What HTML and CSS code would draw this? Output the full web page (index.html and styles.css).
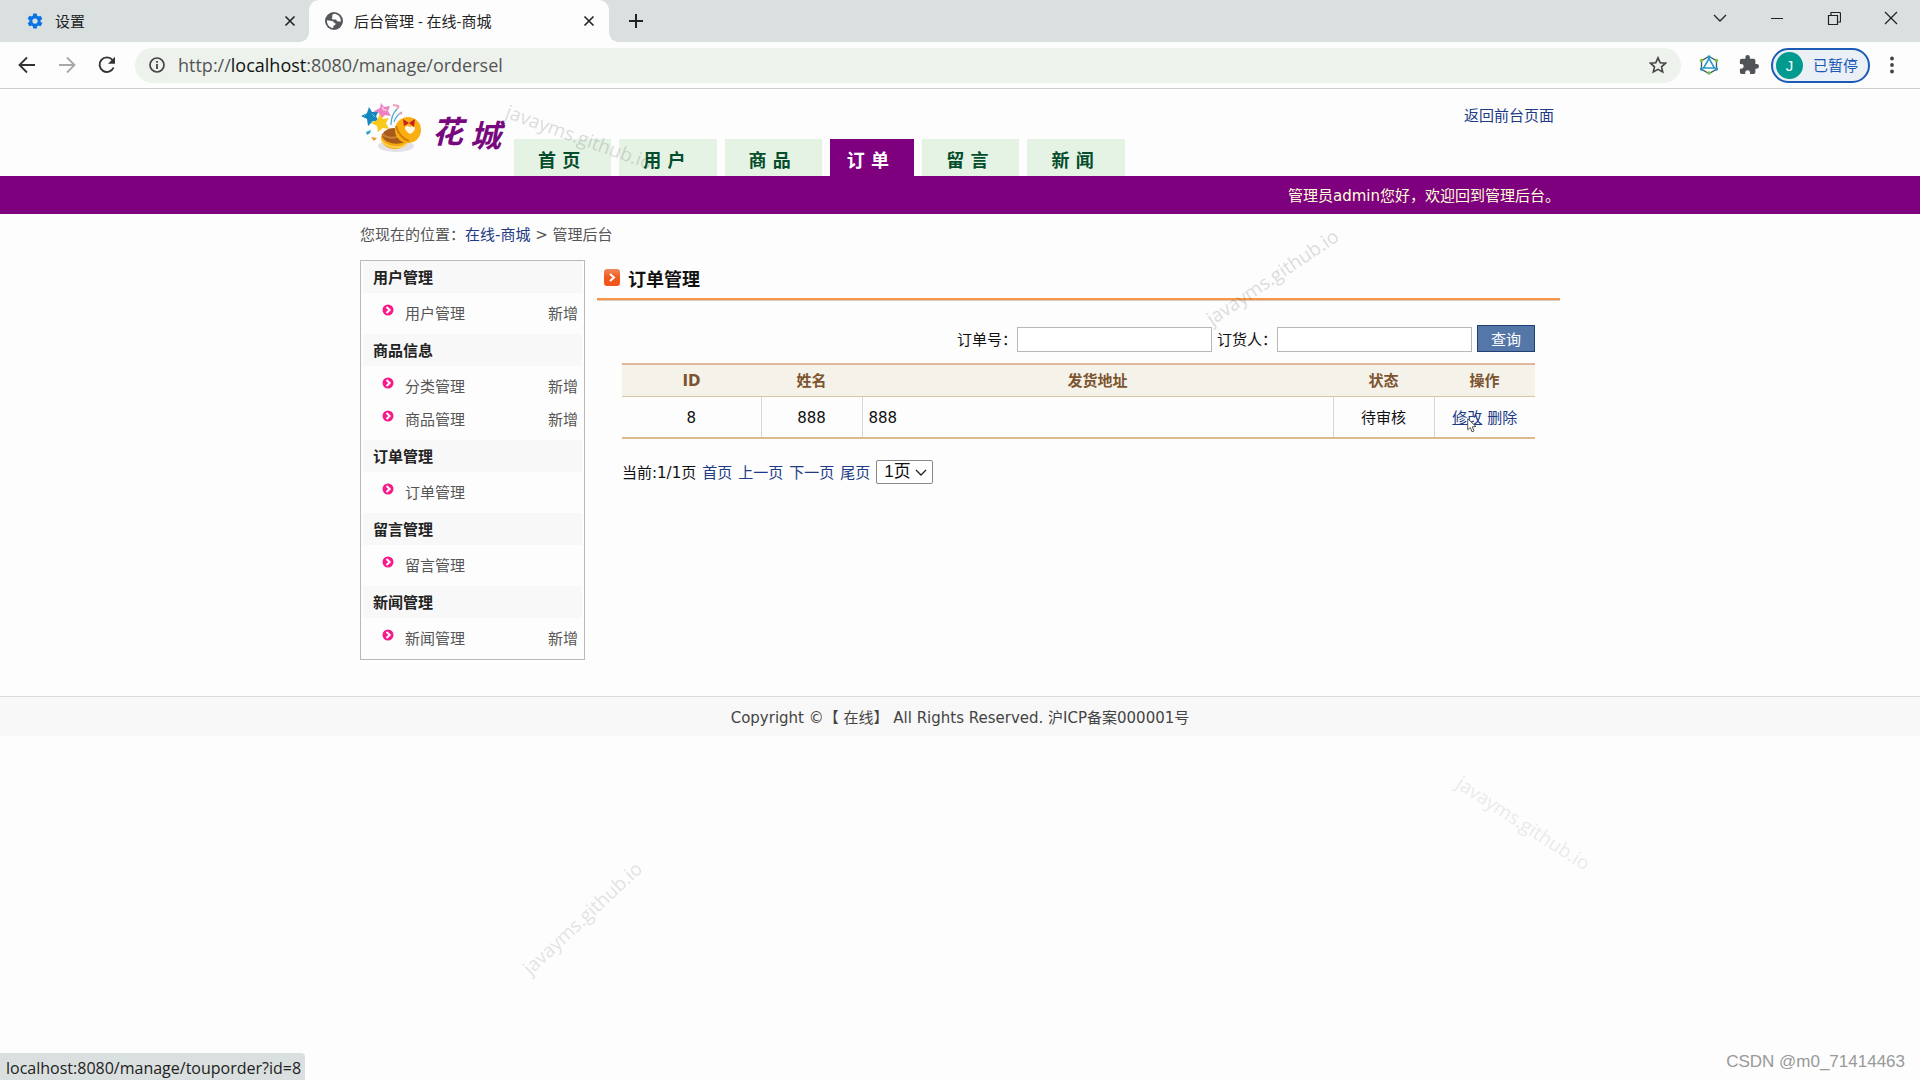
FILE: index.html
```html
<!DOCTYPE html>
<html lang="zh-CN">
<head>
<meta charset="utf-8">
<title>后台管理 - 在线-商城</title>
<link rel="stylesheet" href="styles.css">
</head>
<body>
<svg class="sprite" aria-hidden="true">
  <symbol id="i-close" viewBox="0 0 12 12"><path d="M1.500 1.500l9 9M10.500 1.500l-9 9" fill="none" stroke="currentColor" stroke-width="1.600"/></symbol>
  <symbol id="i-bullet" viewBox="0 0 12 12"><circle cx="6" cy="6" r="5.500" fill="#f5198b"/><path d="M4.500 3l3.200 3-3.200 3" fill="none" stroke="#fff" stroke-width="2"/></symbol>
</svg>

<div class="browser">
  <div class="tabs">
    <div class="tab">
      <svg width="18" height="18" viewBox="0 0 24 24" fill="#0b74e5"><path d="M19.430 12.980a7.800 7.800 0 0 0 0-1.960l2.110-1.650a.5.5 0 0 0 .12-.64l-2-3.460a.5.5 0 0 0-.61-.22l-2.490 1a7.300 7.300 0 0 0-1.690-.98l-.38-2.650A.49.490 0 0 0 14 2h-4a.49.490 0 0 0-.49.420l-.38 2.650c-.61.250-1.170.590-1.690.980l-2.490-1a.49.490 0 0 0-.61.220l-2 3.460a.49.490 0 0 0 .12.640l2.110 1.650a7.900 7.900 0 0 0 0 1.960l-2.110 1.650a.5.5 0 0 0-.12.640l2 3.460c.12.220.390.300.610.220l2.490-1c.520.400 1.080.730 1.690.980l.38 2.650c.030.240.240.420.490.420h4c.250 0 .460-.18.490-.42l.38-2.650c.610-.25 1.170-.59 1.690-.98l2.490 1c.230.090.490 0 .61-.22l2-3.460a.5.5 0 0 0-.12-.64zM12 15.500a3.500 3.500 0 1 1 0-7 3.500 3.500 0 0 1 0 7z"/></svg>
      <span class="tab-title">设置</span>
      <button class="plain" type="button" aria-label="关闭"><svg width="12" height="12"><use href="#i-close"/></svg></button>
    </div>
    <div class="tab tab-active">
      <svg width="18" height="18" viewBox="0 0 18 18"><circle cx="9" cy="9" r="9" fill="#54585c"/><path d="M10.500 1.900C7.500 1.600 6.500 4 7.500 5.200c-1.500 1.300-.5 2.300.8 2.300h2.200c1.500.2.900 1.700 2.300 2 .9.200 2.600 0 3.100-.3.100-3.300-1.900-6.400-5.400-7.300zM2 8.300c-.3 4 2.300 7.500 6.300 7.700v-2.200c1.300-.3 2.400-1.100 2.300-2.400-1.500 0-1.800-1.800-3.500-2.300z" fill="#fff"/></svg>
      <span class="tab-title">后台管理 - 在线-商城</span>
      <button class="plain" type="button" aria-label="关闭"><svg width="12" height="12"><use href="#i-close"/></svg></button>
    </div>
    <button class="plain new-tab" type="button" aria-label="新标签页"><svg width="16" height="16" viewBox="0 0 16 16"><path d="M8 1v14M1 8h14" stroke="currentColor" stroke-width="2"/></svg></button>
    <div class="window-buttons">
      <button class="plain" type="button" aria-label="搜索标签页"><svg width="14" height="14" viewBox="0 0 14 14"><path d="M1 4l6 6 6-6" fill="none" stroke="currentColor" stroke-width="1.300"/></svg></button>
      <button class="plain" type="button" aria-label="最小化"><svg width="14" height="14" viewBox="0 0 14 14"><path d="M1 7.500h12" stroke="currentColor"/></svg></button>
      <button class="plain" type="button" aria-label="还原"><svg width="14" height="14" viewBox="0 0 14 14"><path d="M1.500 4.500h9v9h-9zM4 4V1.500h8.500a1 1 0 0 1 1 1V11H11" fill="none" stroke="currentColor" stroke-width="1.200"/></svg></button>
      <button class="plain" type="button" aria-label="关闭窗口"><svg width="14" height="14" viewBox="0 0 14 14"><path d="M1 1l12 12M13 1L1 13" stroke="currentColor" stroke-width="1.300"/></svg></button>
    </div>
  </div>
  <div class="toolbar">
    <button class="plain tool" type="button" aria-label="后退"><svg width="18" height="18" viewBox="0 0 18 18"><path d="M17 9H2M9 1.500L1.500 9 9 16.500" fill="none" stroke="currentColor" stroke-width="1.800"/></svg></button>
    <button class="plain tool tool-off" type="button" aria-label="前进"><svg width="18" height="18" viewBox="0 0 18 18"><path d="M1 9h15M9 1.500L16.500 9 9 16.500" fill="none" stroke="currentColor" stroke-width="1.800"/></svg></button>
    <button class="plain tool" type="button" aria-label="重新加载"><svg width="18" height="18" viewBox="0 0 18 18"><path d="M15.600 11.500A7.300 7.300 0 1 1 14.500 4" fill="none" stroke="currentColor" stroke-width="1.900"/><path d="M17 .8v7h-7z" fill="currentColor"/></svg></button>
    <div class="address">
      <svg width="16" height="16" viewBox="0 0 16 16"><circle cx="8" cy="8" r="7" fill="none" stroke="#444" stroke-width="1.700"/><path d="M8 7v5M8 4v1.800" stroke="#444" stroke-width="1.800"/></svg>
      <span class="url">http://<b>localhost</b>:8080/manage/ordersel</span>
      <svg width="18" height="18" viewBox="0 0 18 18"><path d="M9 1.800l2.200 4.900 5.300.5-4 3.600 1.200 5.200L9 13.300 4.300 16l1.200-5.200-4-3.600 5.300-.5z" fill="none" stroke="#444" stroke-width="1.600"/></svg>
    </div>
    <svg class="ext" width="20" height="20" viewBox="0 0 20 20"><path d="M10 1.500l7.500 4.200v8.600L10 18.500l-7.500-4.200V5.700z" fill="none" stroke="#3a5a66" stroke-width="1.300"/><path d="M10 3.500l5.500 9.500h-11z" fill="none" stroke="#2596c8" stroke-width="1.500"/><g fill="#7ac143"><circle cx="2.500" cy="5.500" r="1.700"/><circle cx="17.500" cy="5.500" r="1.700"/><circle cx="10" cy="18" r="1.700"/></g><g fill="#2596c8"><circle cx="10" cy="2" r="1.700"/><circle cx="2.500" cy="14" r="1.700"/><circle cx="17.500" cy="14" r="1.700"/></g></svg>
    <svg class="ext" width="20" height="20" viewBox="1 1 22 22" fill="#505458"><path d="M20.500 11H19V7a2 2 0 0 0-2-2h-4V3.500a2.500 2.500 0 0 0-5 0V5H4a2 2 0 0 0-2 2v3.800h1.500a2.700 2.700 0 0 1 0 5.400H2V20a2 2 0 0 0 2 2h3.800v-1.500a2.700 2.700 0 0 1 5.400 0V22H17a2 2 0 0 0 2-2v-4h1.500a2.500 2.500 0 0 0 0-5z"/></svg>
    <button class="profile" type="button"><span class="avatar">J</span>已暂停</button>
    <button class="plain menu" type="button" aria-label="菜单"><svg width="4" height="18" viewBox="0 0 4 18" fill="#444"><circle cx="2" cy="2.500" r="1.900"/><circle cx="2" cy="9" r="1.900"/><circle cx="2" cy="15.500" r="1.900"/></svg></button>
  </div>
</div>

<div class="page">
  <header class="wrap header">
    <svg class="logo" width="154" height="60" viewBox="0 0 154 60" role="img" aria-label="花城">
      <path d="M9 5l3 5 7-1-3 5 3 6-6-1-5 5-1-7-6-3 6-3z" fill="#1687bd"/>
      <path d="M12 12l3 3M7 11l-3 3" stroke="#6bc3e8" stroke-width="1"/>
      <path d="M21 1l3 4 6-1-2 5 3 5-6-1-4 4-2-6-5-2 6-3z" fill="#ee7fc0"/>
      <path d="M22 5l2 3 3 0" fill="none" stroke="#fbc6e4" stroke-width="1.500"/>
      <path d="M20 12l3 5 6-1-3 5 3 6-6-1-5 4-1-6-6-3 6-3z" fill="#fbc81c"/>
      <path d="M31 23c0-8 2-12 6-16M34 20c2-6 4-8 8-10" fill="none" stroke="#45a9cf" stroke-width="1.200"/>
      <path d="M33 3l6 1M37 7l2-3M39 12l3-1" stroke="#ee9fb8" stroke-width="2"/>
      <path d="M6 30l5-2-1 3-3 2z" fill="#2d9fc5"/><path d="M11 35l6 1-3 3z" fill="#ee9527"/>
      <ellipse cx="36" cy="44" rx="18" ry="6" fill="#c9c4cf" opacity=".5"/>
      <path d="M21 35c0 15 24 16 27 3l-9-9c-8-2-17 0-18 6z" fill="#f5a70d"/>
      <path d="M22 34c3 8 17 10 24 5-3-8-8-12-12-13-6 0-11 3-12 8z" fill="#a65a1b"/>
      <path d="M22 32c6 5 14 5 20 0" fill="none" stroke="#c98432" stroke-width="2"/>
      <path d="M22 39c5 7 19 8 24 3" fill="none" stroke="#ffd34e" stroke-width="2"/>
      <circle cx="48" cy="28" r="13" fill="#f9ae11"/>
      <path d="M36 24c2 7 7 13 13 15" fill="none" stroke="#d27b08" stroke-width="2"/>
      <path d="M50 32c-8-5-5-10 0-7 5-3 8 3 0 7z" fill="#fff8e9"/>
      <path d="M49 21l-6-4 1 7zM49 21l6-4-1 8z" fill="#c91f24"/>
      <text class="logo-text" x="72" y="41">花</text><text class="logo-text" x="110" y="45">城</text>
    </svg>
    <nav class="nav">
      <a href="#">首 页</a><a href="#">用 户</a><a href="#">商 品</a><a class="current" href="#">订 单</a><a href="#">留 言</a><a href="#">新 闻</a>
    </nav>
    <a class="back" href="#">返回前台页面</a>
  </header>
  <div class="welcome"><div class="wrap">管理员admin您好，欢迎回到管理后台。</div></div>
  <div class="wrap crumbs">您现在的位置：<a href="#">在线-商城</a> &gt; 管理后台</div>

  <div class="wrap columns">
    <aside class="side">
      <h3>用户管理</h3>
      <ul>
        <li><svg width="12" height="12"><use href="#i-bullet"/></svg><a href="#">用户管理</a><a class="add" href="#">新增</a></li>
      </ul>
      <h3>商品信息</h3>
      <ul>
        <li><svg width="12" height="12"><use href="#i-bullet"/></svg><a href="#">分类管理</a><a class="add" href="#">新增</a></li>
        <li><svg width="12" height="12"><use href="#i-bullet"/></svg><a href="#">商品管理</a><a class="add" href="#">新增</a></li>
      </ul>
      <h3>订单管理</h3>
      <ul>
        <li><svg width="12" height="12"><use href="#i-bullet"/></svg><a href="#">订单管理</a></li>
      </ul>
      <h3>留言管理</h3>
      <ul>
        <li><svg width="12" height="12"><use href="#i-bullet"/></svg><a href="#">留言管理</a></li>
      </ul>
      <h3>新闻管理</h3>
      <ul>
        <li><svg width="12" height="12"><use href="#i-bullet"/></svg><a href="#">新闻管理</a><a class="add" href="#">新增</a></li>
      </ul>
    </aside>

    <main class="main">
      <h2><svg width="16" height="18" viewBox="0 0 16 18"><defs><linearGradient id="g" x1="0" y1="0" x2="0" y2="1"><stop offset="0" stop-color="#ee8a5c"/><stop offset=".5" stop-color="#ee5a1c"/><stop offset="1" stop-color="#f4531c"/></linearGradient></defs><rect width="16" height="17" rx="3" fill="url(#g)"/><path d="M6 5l4 3.500L6 12" fill="none" stroke="#fff" stroke-width="2"/></svg>订单管理</h2>
      <div class="content">
        <form class="search">
          <label for="orderNo">订单号：</label><input id="orderNo" type="text">
          <label for="buyer">订货人：</label><input id="buyer" type="text">
          <button type="button">查询</button>
        </form>
        <table class="orders">
          <colgroup><col class="c-id"><col class="c-s"><col><col class="c-s"><col class="c-s"></colgroup>
          <thead><tr><th>ID</th><th>姓名</th><th>发货地址</th><th>状态</th><th>操作</th></tr></thead>
          <tbody><tr><td>8</td><td>888</td><td class="addr">888</td><td>待审核</td>
            <td><span class="actions"><a class="hovered" href="#">修改</a> <a href="#">删除</a><svg class="cursor" width="10" height="15" viewBox="0 0 10 15"><path d="M.7.8v11l2.600-2.300 1.700 4.300 2-.8-1.700-4.200 3.700-.3z" fill="#fff" stroke="#555"/></svg></span></td></tr></tbody>
        </table>
        <div class="pager">
          <span>当前:1/1页</span>
          <a href="#">首页</a>
          <a href="#">上一页</a>
          <a href="#">下一页</a>
          <a href="#">尾页</a>
          <span class="pick"><select aria-label="页码"><option>1页</option></select><svg width="12" height="8" viewBox="0 0 12 8"><path d="M1 1l5 5 5-5" fill="none" stroke="#222" stroke-width="1.300"/></svg></span>
        </div>
      </div>
    </main>
  </div>
  <footer class="footer">Copyright ©【 在线】 All Rights Reserved. 沪ICP备案000001号</footer>

  <span class="mark m1">javayms.github.io</span>
  <span class="mark m2">javayms.github.io</span>
  <span class="mark m3">javayms.github.io</span>
  <span class="mark m4">javayms.github.io</span>
  <span class="credit">CSDN @m0_71414463</span>
  <div class="status">localhost:8080/manage/touporder?id=8</div>
</div>
</body>
</html>
```
FILE: styles.css
```css
* { box-sizing: border-box; }
body {
  margin: 0;
  min-height: 100vh;
  display: flex;
  flex-direction: column;
  background: #fdfdfd;
  color: #111;
  font: 15px/20px "DejaVu Sans", "Noto Sans CJK SC", sans-serif;
}
a { color: #203a86; text-decoration: none; }
svg { flex: none; display: block; }
.sprite { position: absolute; width: 0; height: 0; }
.plain { border: 0; padding: 0; background: none; color: #222; display: flex; justify-content: center; align-items: center; }

/* browser frame */
.browser { font-family: "Open Sans", "Noto Sans CJK SC", sans-serif; border-bottom: 1px solid #cfcdd2; }
.tabs { display: flex; height: 42px; background: #dae0e0; }
.tab { display: flex; align-items: center; gap: 11px; width: 309px; padding: 0 13px 0 26px; }
.tab-title { flex: 1; color: #222; }
.tab-active { position: relative; width: 300px; padding: 0 14px 0 16px; background: #fdfdfd; border-radius: 10px 10px 0 0; }
.tab-active::before, .tab-active::after {
  content: ""; position: absolute; bottom: 0; width: 10px; height: 10px;
}
.tab-active::before { right: 100%; background: radial-gradient(circle at 0 0, #dae0e0 10px, #fdfdfd 10px); }
.tab-active::after { left: 100%; background: radial-gradient(circle at 100% 0, #dae0e0 10px, #fdfdfd 10px); }
.new-tab { width: 54px; }
.window-buttons { display: flex; margin: 0 1px 0 auto; height: 36px; }
.window-buttons .plain { width: 57px; }
.toolbar { display: flex; align-items: center; height: 46px; padding: 0 26px 0 7px; }
.tool { width: 40px; height: 36px; color: #333; }
.tool-off { color: #a6a8aa; }
.address { flex: 1; display: flex; align-items: center; gap: 13px; height: 35px; margin: 0 18px 0 8px; padding: 0 14px; border-radius: 18px; background: #edf2ed; }
.url { flex: 1; font-size: 18px; line-height: 24px; color: #555; }
.url b { font-weight: 400; color: #111; }
.ext { margin-right: 20px; }
.ext + .ext { margin-right: 12px; }
.profile { display: flex; align-items: center; gap: 10px; width: 99px; height: 35px; padding: 0 3px; border: 2px solid #1a5bb5; border-radius: 18px; background: #ebeff6; color: #1a5bb5; font: 15px/20px "Open Sans", "Noto Sans CJK SC", sans-serif; white-space: nowrap; }
.avatar { width: 27px; height: 27px; border-radius: 50%; background: #009a8e; color: #fff; line-height: 27px; text-align: center; font-family: "Liberation Sans", sans-serif; }
.menu { margin-left: 20px; }

/* shop admin */
.page { position: relative; flex: 1; overflow: hidden; }
.wrap { max-width: 1200px; margin: 0 auto; }
.header { display: flex; height: 87px; }
.logo { margin-top: 13px; }
.logo-text { font: italic 700 31px "Noto Sans CJK SC", sans-serif; fill: #78087e; }
.nav { display: flex; align-self: flex-end; gap: 8px; }
.nav a { padding: 7px 31px 0 24px; background: #e5f3e5; color: #054d2c; font-size: 18px; font-weight: 700; line-height: 30px; }
.nav .current { padding: 7px 25px 0 17px; background: #7e007e; color: #fff; }
.back { margin: 17px 6px 0 auto; }
.welcome { padding: 10px 0 8px; background: #7e007e; color: #ffffd8; text-align: right; }
.crumbs { padding: 11px 0 15px; color: #555; }
.columns { display: flex; align-items: flex-start; gap: 12px; }
.side { width: 225px; border: 1px solid #b9b9b9; }
.side h3 { margin: 0 2px; padding: 2px 10px 0; background: #f8f8f8; color: #222; font-size: 15px; line-height: 30px; }
.side ul { margin: 0; padding: 5px 6px 3px 21px; list-style: none; }
.side li { display: flex; gap: 11px; line-height: 33px; }
.side li svg { margin-top: 6px; }
.side li a { color: #555; }
.side .add { margin-left: auto; }
.main { flex: 1; }
h2 { display: flex; gap: 8px; margin: 0; padding: 2px 0 0 7px; border-bottom: 2px solid #f79646; box-shadow: 0 1px #dccbc2; font-size: 18px; line-height: 36px; }
h2 svg { margin-top: 7px; }
.content { padding: 25px 25px 0; }
.search { display: flex; justify-content: flex-end; align-items: center; gap: 5px; }
.search label { width: 55px; padding-top: 2px; white-space: nowrap; }
.search input { width: 195px; height: 25px; border: 1px solid #b9b5bb; background: #fff; font: inherit; }
.search label + input { margin-top: 2px; }
.search button { width: 58px; height: 27px; padding: 2px 0 0; border: 1px solid #1f3f75; background: #5577a8; color: #fff; font: inherit; }
.orders { width: 100%; margin-top: 11px; table-layout: fixed; border-collapse: collapse; border-top: 2px solid #deb89c; border-bottom: 2px solid #deb98e; text-align: center; }
.c-id { width: 139px; }
.c-s { width: 101px; }
.orders th { height: 32px; padding: 1px 0 0; background: #f5f2e9; color: #7c5430; border-bottom: 1px solid #dfc3a5; }
.orders td { height: 42px; padding: 2px 0 0; }
.orders td + td { border-left: 1px solid #d8d8d8; }
.orders .addr { padding-left: 6px; text-align: left; }
.actions { position: relative; }
.hovered { text-decoration: underline; }
.cursor { position: absolute; left: 15px; top: 9px; }
.pager { display: flex; align-items: center; gap: 6px; margin-top: 21px; }
.pager > a, .pager > span:first-child { padding-top: 2px; }
.pick { position: relative; }
.pick select { appearance: none; display: block; width: 57px; height: 24px; padding: 0 0 0 7px; border: 1px solid #888; border-radius: 2px; background: #fff; color: #111; font: 17px/20px "Liberation Sans", "Noto Sans CJK SC", sans-serif; }
.pick svg { position: absolute; right: 6px; top: 9px; pointer-events: none; }
.footer { margin-top: 36px; padding: 11px 0 8px; border-top: 1px solid #dcdcdc; background: #f8f8f8; color: #444; text-align: center; }

/* overlays */
.mark { position: absolute; font: 19px/24px "Open Sans", sans-serif; color: #000; opacity: .13; transform-origin: center; pointer-events: none; }
.m1 { left: 502px; top: 36px; transform: rotate(20deg); }
.m2 { left: 1195px; top: 176px; transform: rotate(-34deg); }
.m3 { left: 1446px; top: 722px; transform: rotate(33deg); opacity: .07; }
.m4 { left: 505px; top: 817px; transform: rotate(-43deg); opacity: .1; }
.credit { position: absolute; right: 15px; bottom: 7px; color: #999; font: 17px/22px "Liberation Sans", sans-serif; }
.status { position: absolute; left: 0; bottom: 0; padding: 3px 4px 0 6px; border-top-right-radius: 4px; background: #dae0e0; color: #222; font: 16px/24px "Open Sans", sans-serif; }
```
